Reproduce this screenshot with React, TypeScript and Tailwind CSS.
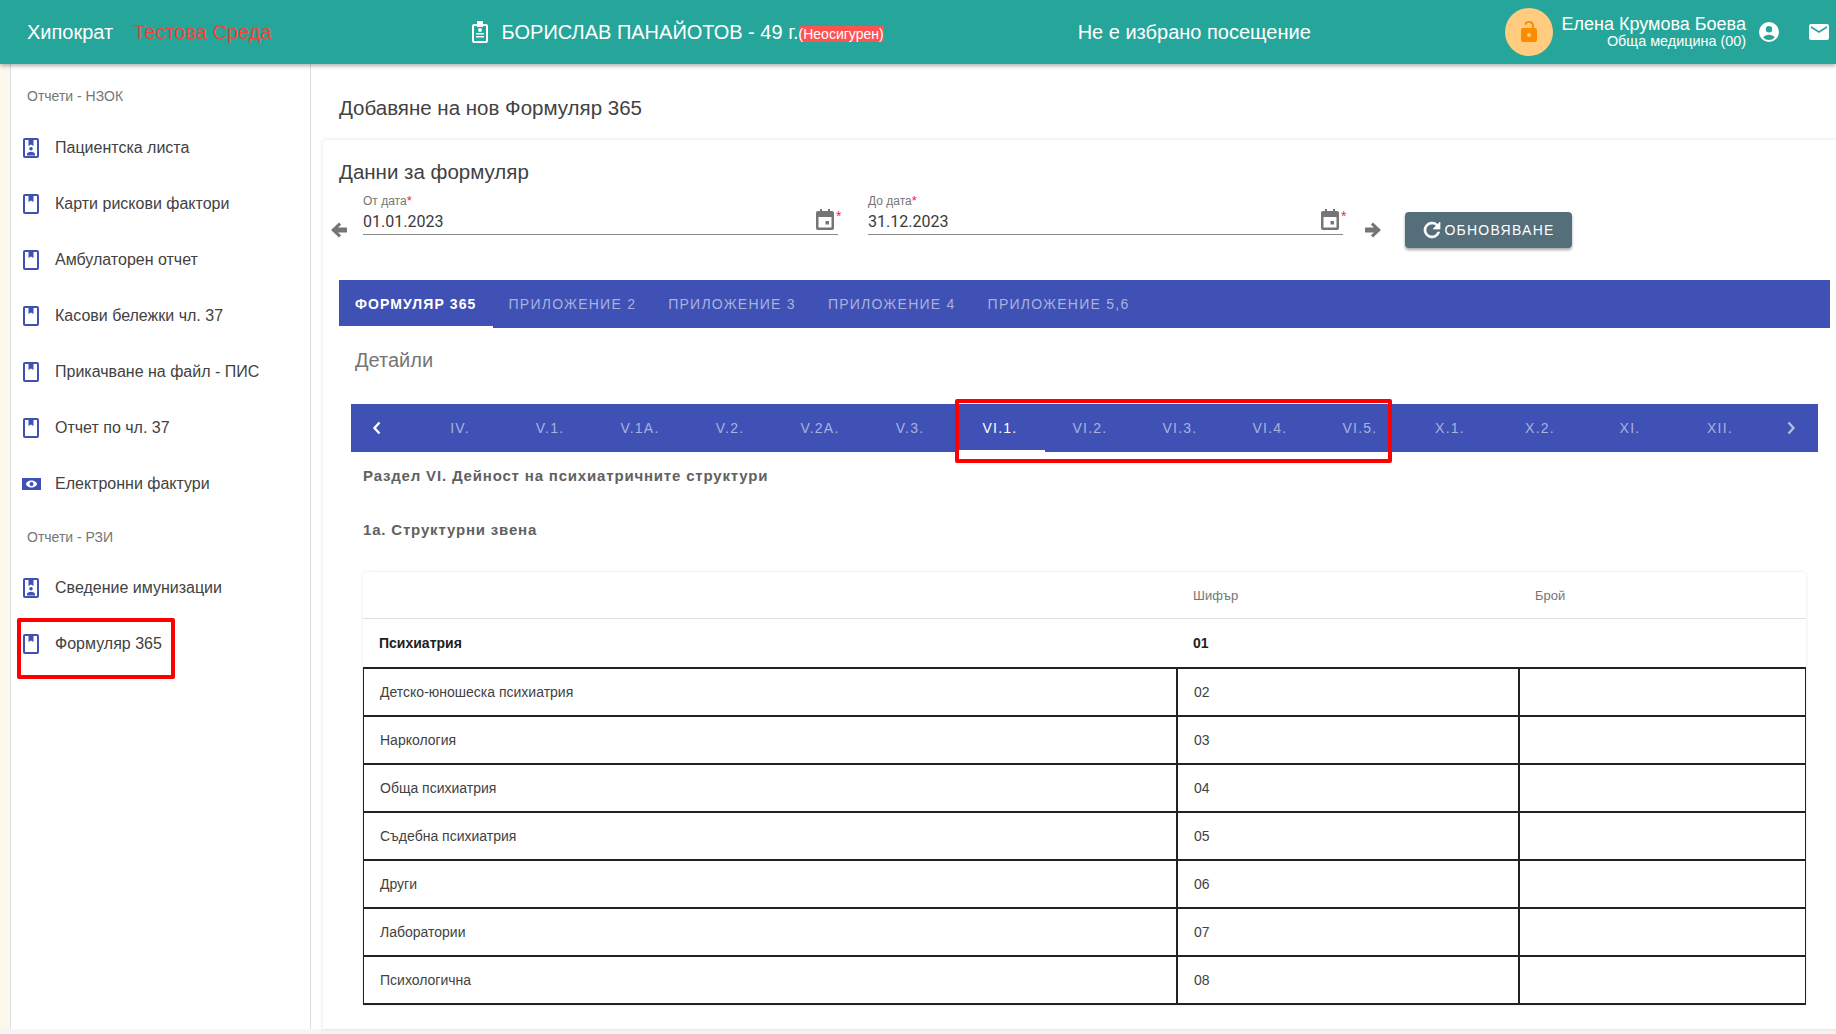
import React from "react";

const F = { fontFamily: "'Liberation Sans', Arial, sans-serif" };
const R = { fontFamily: "Roboto, sans-serif" };

function BookIcon({ person }: { person?: boolean }) {
  return (
    <svg width="18" height="22" viewBox="0 0 18 22" className="shrink-0 text-[#3f51b5]">
      <path fill="currentColor" fillRule="evenodd" d="M3 1h12a2 2 0 0 1 2 2v16a2 2 0 0 1-2 2H3a2 2 0 0 1-2-2V3a2 2 0 0 1 2-2zm0 2v16h12V3h-3.500v6L9 7.500 6.500 9V3z" />
      {person && (
        <path fill="currentColor" d="M9 10a1.800 1.800 0 1 1 0 3.600a1.800 1.800 0 0 1 0-3.600zM5 18.500v-1.500c0-1.500 2.800-2.300 4-2.300s4 .8 4 2.300v1.500z" />
      )}
    </svg>
  );
}

function BillIcon() {
  return (
    <svg width="20" height="22" viewBox="0 0 20 22" className="shrink-0 text-[#3f51b5]">
      <path fill="currentColor" fillRule="evenodd" d="M0 5h19v12H0zM9.500 7.500c-3 0-5.500 2-5.500 3.500s2.500 3.500 5.500 3.500S15 12.500 15 11s-2.500-3.500-5.500-3.500zM9.500 9a2 2 0 1 1 0 4a2 2 0 0 1 0-4z" />
    </svg>
  );
}

function CalIcon() {
  return (
    <svg width="20" height="22" viewBox="0 0 20 22" className="shrink-0 text-[#757575]">
      <path fill="currentColor" fillRule="evenodd" d="M5 1h2v2h6V1h2v2h2a2 2 0 0 1 2 2v15a2 2 0 0 1-2 2H3a2 2 0 0 1-2-2V5a2 2 0 0 1 2-2h2zM3.500 9v10.500h13V9zm7 4h3.500v3.500h-3.500z" />
    </svg>
  );
}

function Arrow({ dir }: { dir: "l" | "r" }) {
  return (
    <svg width="18" height="18" viewBox="0 0 18 18" className="text-[#757575]">
      {dir === "l" ? (
        <path fill="currentColor" d="M9 1.500l2.200 2.200L8 6.500h9v5H8l3.200 2.800L9 16.500 1 9z" />
      ) : (
        <path fill="currentColor" d="M9 1.500L6.800 3.700 10 6.500H1v5h9l-3.200 2.800L9 16.500 17 9z" />
      )}
    </svg>
  );
}

function Chevron({ dir }: { dir: "l" | "r" }) {
  return (
    <svg width="12" height="16" viewBox="0 0 12 16" className={dir === "l" ? "text-white" : "text-[#b4bbe0]"}>
      <path
        fill="none"
        stroke="currentColor"
        strokeWidth="2.400"
        d={dir === "l" ? "M8.500 2.500L3.500 8l5 5.500" : "M3.500 2.500l5 5.500-5 5.500"}
      />
    </svg>
  );
}

function DateField({ label, value }: { label: string; value: string }) {
  return (
    <div className="flex w-[475px] flex-col">
      <div className="h-[14px] text-[12px] leading-[14px] text-[#757575]">
        {label}
        <span className="text-[13px] text-[#ff1744]">*</span>
      </div>
      <div className="flex h-[27px] items-center justify-between border-b border-[#8a8a8a] pt-[2px]">
        <span className="text-[16px] leading-[24px] text-[#3a3a3a]" style={R}>{value}</span>
        <div className="mb-[6px] mr-[2px] flex items-start">
          <CalIcon />
          <span className="ml-[1px] mt-[1px] w-0 text-[14px] leading-[14px] text-[#ff1744]">*</span>
        </div>
      </div>
    </div>
  );
}

const top = ["ФОРМУЛЯР 365", "ПРИЛОЖЕНИЕ 2", "ПРИЛОЖЕНИЕ 3", "ПРИЛОЖЕНИЕ 4", "ПРИЛОЖЕНИЕ 5,6"];
const sub = ["IV.", "V.1.", "V.1А.", "V.2.", "V.2А.", "V.3.", "VI.1.", "VI.2.", "VI.3.", "VI.4.", "VI.5.", "X.1.", "X.2.", "XI.", "XII."];
const rows: [string, string][] = [
  ["Детско-юношеска психиатрия", "02"],
  ["Наркология", "03"],
  ["Обща психиатрия", "04"],
  ["Съдебна психиатрия", "05"],
  ["Други", "06"],
  ["Лаборатории", "07"],
  ["Психологична", "08"],
];

function NavItem({ label, icon }: { label: string; icon: "book" | "person" | "bill" }) {
  return (
    <div className="flex h-14 items-center pl-[11px]">
      <div className="flex w-[33px] items-center">
        {icon === "bill" ? <BillIcon /> : <BookIcon person={icon === "person"} />}
      </div>
      <span className="text-[16px] leading-[24px] text-[#424242]">{label}</span>
    </div>
  );
}

export default function App() {
  return (
    <div className="relative flex h-[1034px] w-[1836px] flex-col overflow-hidden bg-[#f5f5f5]" style={F}>
      <header className="relative z-10 flex h-16 shrink-0 items-center bg-[#26a69a] text-white shadow-[0_2px_4px_rgba(0,0,0,0.3)]">
        <span className="ml-[27px] text-[20px]">Хипократ</span>
        <span className="ml-[20px] text-[20px] text-[#f44336]">Тестова Среда</span>
        <svg width="16" height="22" viewBox="0 0 16 22" className="ml-[200px] text-white">
          <path fill="currentColor" fillRule="evenodd" d="M5 0h6v3h3a2 2 0 0 1 2 2v15a2 2 0 0 1-2 2H2a2 2 0 0 1-2-2V5a2 2 0 0 1 2-2h3zM2 5v15h12V5h-3v1H5V5zm6 2a2 2 0 1 1 0 4a2 2 0 0 1 0-4zM4 12h8v1.500H4zm0 3h8v1.500H4z" />
        </svg>
        <span className="ml-[14px] text-[20px]">БОРИСЛАВ ПАНАЙОТОВ - 49 г.</span>
        <span className="mt-[4px] rounded-[2px] bg-[#ff5252] text-[14px] leading-[16px]">(Неосигурен)</span>
        <span className="ml-[194px] text-[20px]">Не е избрано посещение</span>
        <div className="ml-auto mr-[7px] flex items-center">
          <div className="flex h-12 w-12 items-center justify-center rounded-full bg-[#ffcc80]">
            <svg width="24" height="24" viewBox="0 0 24 24" className="text-[#fb8c00]">
              <path fill="currentColor" d="M18 8h-1V6a5 5 0 0 0-9.800-1.400l1.900.5A3 3 0 0 1 15 6v2H6a2 2 0 0 0-2 2v10a2 2 0 0 0 2 2h12a2 2 0 0 0 2-2V10a2 2 0 0 0-2-2zm-6 9a2 2 0 1 1 0-4a2 2 0 0 1 0 4z" />
            </svg>
          </div>
          <div className="mb-[2px] ml-2 flex flex-col items-end">
            <span className="text-[18px] leading-[19px]">Елена Крумова Боева</span>
            <span className="text-[14.400px] leading-[14px]">Обща медицина (00)</span>
          </div>
          <svg width="24" height="24" viewBox="0 0 24 24" className="ml-[11px]">
            <path fill="#fff" fillRule="evenodd" d="M12 2a10 10 0 1 1 0 20a10 10 0 0 1 0-20zm0 4a3.200 3.200 0 1 0 0 6.400A3.200 3.200 0 0 0 12 6zm0 8.800c-2.400 0-4.600 1-5.800 2.600A8 8 0 0 0 12 20a8 8 0 0 0 5.800-2.600c-1.200-1.600-3.400-2.600-5.800-2.600z" />
          </svg>
          <svg width="24" height="24" viewBox="0 0 24 24" className="ml-[26px] -mr-[2px]">
            <path fill="#fff" d="M20 4H4a2 2 0 0 0-2 2v12a2 2 0 0 0 2 2h16a2 2 0 0 0 2-2V6a2 2 0 0 0-2-2zm0 4l-8 5-8-5V6l8 5 8-5z" />
          </svg>
        </div>
      </header>

      <div className="flex h-[965px] shrink-0 bg-white">
        <div className="w-[10px] shrink-0 bg-[#fdf8ee]" />
        <aside className="flex w-[301px] shrink-0 flex-col border-x border-[#dedede] bg-white pt-[9px]">
          <div className="flex h-[47px] items-center pl-[16px] text-[14px] text-[#757575]">Отчети - НЗОК</div>
          <NavItem label="Пациентска листа" icon="person" />
          <NavItem label="Карти рискови фактори" icon="book" />
          <NavItem label="Амбулаторен отчет" icon="book" />
          <NavItem label="Касови бележки чл. 37" icon="book" />
          <NavItem label="Прикачване на файл - ПИС" icon="book" />
          <NavItem label="Отчет по чл. 37" icon="book" />
          <NavItem label="Електронни фактури" icon="bill" />
          <div className="flex h-12 items-center pl-[16px] pt-[3px] text-[14px] text-[#757575]">Отчети - РЗИ</div>
          <NavItem label="Сведение имунизации" icon="person" />
          <NavItem label="Формуляр 365" icon="book" />
        </aside>

        <main className="flex min-w-0 flex-1 flex-col pl-[12px]">
          <div className="flex h-[76px] shrink-0 items-center pl-[16px] pt-[12px] text-[20.500px] text-[#424242]">
            Добавяне на нов Формуляр 365
          </div>
          <section className="flex-1 rounded-tl-[4px] bg-white pl-[16px] pt-[20px] shadow-[0_0_4px_rgba(0,0,0,0.12)]">
            <h2 className="h-[24px] text-[20.500px] font-normal leading-[24px] text-[#424242]">Данни за формуляр</h2>
            <div className="mt-[10px] flex h-[54px]">
              <div className="-ml-[9px] flex w-[33px] items-end pb-[9px]">
                <Arrow dir="l" />
              </div>
              <div className="flex">
                <DateField label="От дата" value="01.01.2023" />
                <div className="w-[30px]" />
                <DateField label="До дата" value="31.12.2023" />
              </div>
              <div className="ml-[21px] flex items-end pb-[9px]">
                <Arrow dir="r" />
              </div>
              <button className="ml-[23px] mt-[18px] flex h-[36px] w-[167px] items-center justify-center rounded-[4px] bg-[#546e7a] text-[14px] font-normal tracking-[1.25px] text-white shadow-[0_2px_3px_rgba(0,0,0,0.35)]">
                <svg width="24" height="24" viewBox="0 0 24 24" className="-ml-[2px]">
                  <path fill="#fff" stroke="#fff" strokeWidth="0.7" d="M17.650 6.350A8 8 0 1 0 19.730 14h-2.080A6 6 0 1 1 12 6c1.660 0 3.140.69 4.220 1.780L13 11h7V4z" />
                </svg>
                <span>ОБНОВЯВАНЕ</span>
              </button>
            </div>

            <div className="mt-[32px] flex h-12 w-[1491px] bg-[#3f51b5]">
              {top.map((t, i) => (
                <div
                  key={t}
                  className={
                    i === 0
                      ? "flex h-12 items-center border-b-2 border-white px-4 pt-[2px] text-[14px] font-bold tracking-[1.1px] text-white"
                      : "flex h-12 items-center px-4 text-[14px] font-normal tracking-[1.25px] text-[#a9b1dd]"
                  }
                >
                  {t}
                </div>
              ))}
            </div>

            <div className="ml-[16px] flex h-[76px] items-center pb-[12px] text-[20px] text-[#757575]">Детайли</div>

            <div className="ml-[12px] flex h-12 w-[1467px] bg-[#3f51b5]">
              <div className="mr-[12px] flex h-12 w-[52px] items-center justify-center">
                <Chevron dir="l" />
              </div>
              {sub.map((t, i) => (
                <div
                  key={t}
                  className={
                    i === 6
                      ? "flex h-12 w-[90px] items-center justify-center border-b-2 border-white pt-[2px] text-[14px] font-normal tracking-[1.25px] text-white"
                      : "flex h-12 w-[90px] items-center justify-center text-[14px] font-normal tracking-[1.25px] text-[#a9b1dd]"
                  }
                >
                  {t}
                </div>
              ))}
              <div className="flex h-12 w-[52px] items-center justify-center">
                <Chevron dir="r" />
              </div>
            </div>

            <div className="ml-[24px] mt-[12px] w-[1443px]">
              <div className="flex h-[24px] items-center text-[15px] font-bold tracking-[0.82px] text-[#616161]">
                Раздел VI. Дейност на психиатричните структури
              </div>
              <div className="mt-[30px] flex h-[24px] items-center text-[15px] font-bold tracking-[0.82px] text-[#616161]">
                1а. Структурни звена
              </div>

              <div className="mt-[30px] rounded-t-[4px] bg-white text-[14px] text-[#424242] shadow-[0_0_3px_rgba(0,0,0,0.12)]">
                <div className="grid h-[47px] grid-cols-[814px_342px_1fr] items-center border-b border-[#e0e0e0] pt-[2px] text-[13px] text-[#757575]">
                  <div />
                  <div className="pl-[16px]">Шифър</div>
                  <div className="pl-[16px]">Брой</div>
                </div>
                <div className="grid h-[48px] grid-cols-[814px_342px_1fr] items-center font-bold text-[#212121]">
                  <div className="pl-[16px]">Психиатрия</div>
                  <div className="pl-[16px]">01</div>
                  <div />
                </div>
                <div className="border-b-2 border-[#222]">
                  {rows.map(([name, code]) => (
                    <div key={code} className="grid h-[48px] grid-cols-[814px_342px_1fr] border-t-2 border-[#222] border-x border-x-[#222]">
                      <div className="flex items-center border-r-2 border-[#222] pl-[16px]">{name}</div>
                      <div className="flex items-center border-r-2 border-[#222] pl-[16px]">{code}</div>
                      <div />
                    </div>
                  ))}
                </div>
              </div>
            </div>
          </section>
        </main>
      </div>

      {/* red annotation boxes lying over the page */}
      <div className="absolute left-[17px] top-[618px] z-20 h-[61px] w-[158px] rounded-[2px] border-4 border-[#ff0000]" />
      <div className="absolute left-[955px] top-[399px] z-20 h-[64px] w-[437px] rounded-[2px] border-4 border-[#ff0000]" />
    </div>
  );
}
